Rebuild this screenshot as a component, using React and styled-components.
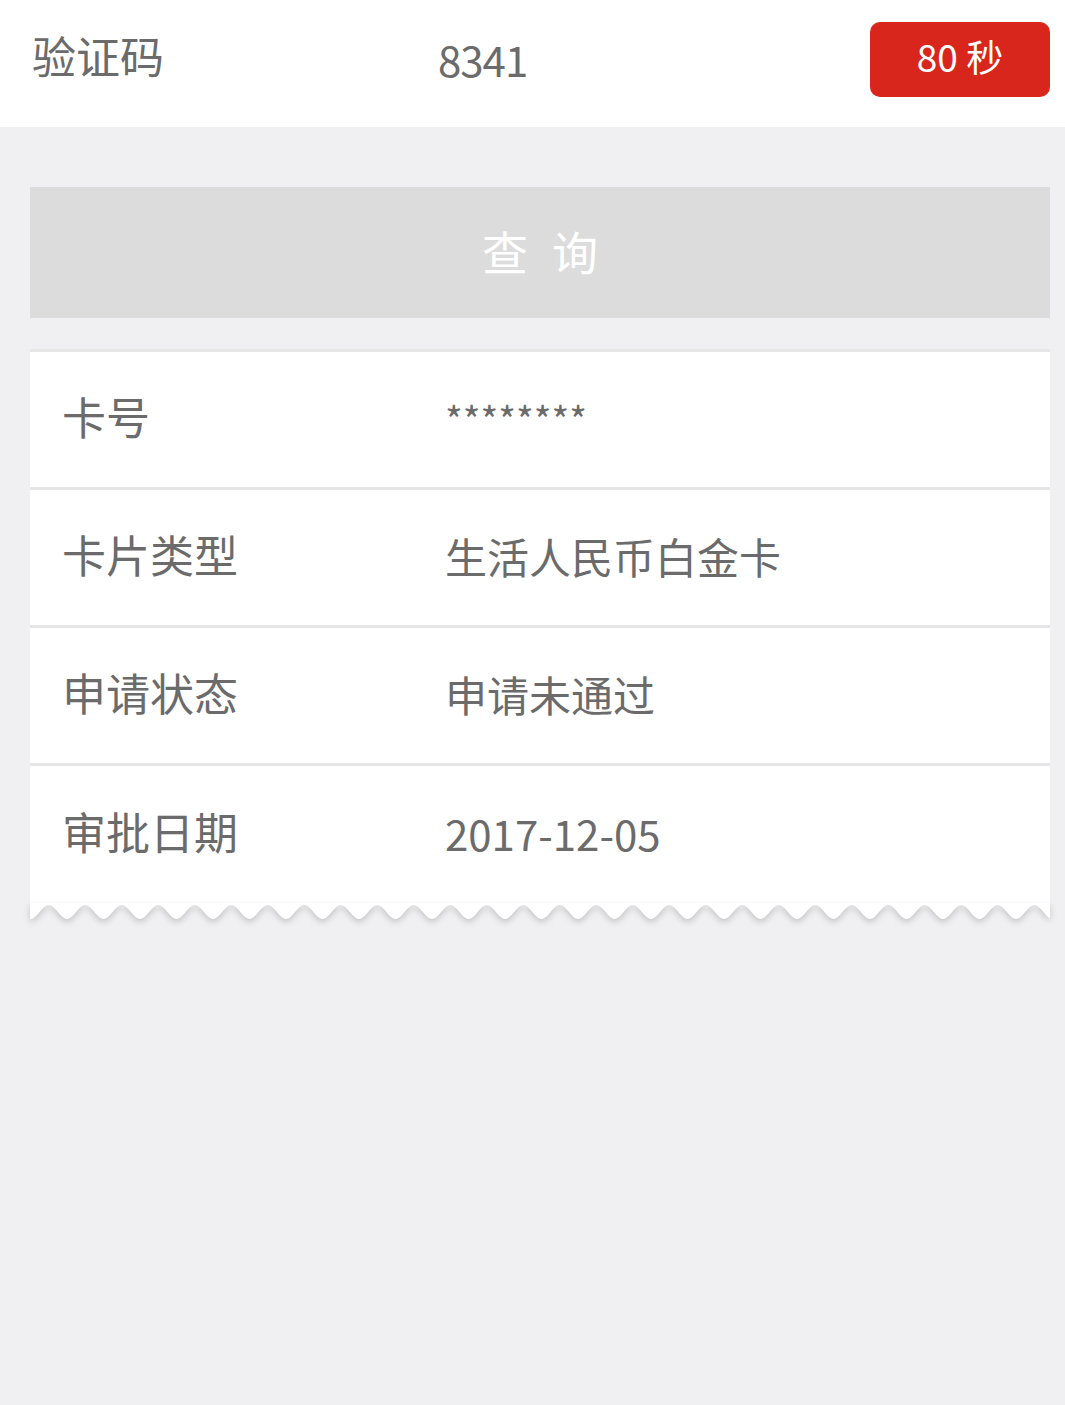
import React from 'react';
import styled, { createGlobalStyle } from 'styled-components';

const rows = [
  { label: '卡号', value: '********', masked: true },
  { label: '卡片类型', value: '生活人民币白金卡' },
  { label: '申请状态', value: '申请未通过' },
  { label: '审批日期', value: '2017-12-05' },
];

// zigzag edge under the card, drawn as a sine strip
const WAVE_W = 1020;
const wavePath = () => {
  let d = 'M0,0 ';
  for (let x = 0; x <= WAVE_W; x += 2) {
    const y = 9 + 7 * Math.cos((2 * Math.PI * (x - 37)) / 36.5);
    d += `L${x},${y.toFixed(2)} `;
  }
  return d + `L${WAVE_W},0 Z`;
};

const App = () => {
  return (
    <>
      <GlobalStyle />
      <TopBar>
        <BarLabel>验证码</BarLabel>
        <Code>8341</Code>
        <CountDown>80 秒</CountDown>
      </TopBar>

      <Content>
        <QueryButton>查询</QueryButton>

        <Card>
          {rows.map((r, i) => (
            <Row key={r.label} last={i === rows.length - 1}>
              <RowLabel>{r.label}</RowLabel>
              <RowValue masked={r.masked}>{r.value}</RowValue>
            </Row>
          ))}
        </Card>
        <Wave viewBox={`0 0 ${WAVE_W} 18`} preserveAspectRatio="none">
          <path d={wavePath()} fill="#fff" />
        </Wave>
      </Content>
    </>
  );
};

export default App;

const GlobalStyle = createGlobalStyle`
  html, body {
    margin: 0;
    background: #f0f0f2;
    font-family: "Noto Sans CJK SC", "Noto Sans", sans-serif;
  }
  body {
    min-height: 1405px;
  }
`;

const TopBar = styled.div`
  display: flex;
  align-items: center;
  height: 127px;
  box-sizing: border-box;
  padding: 0 15px 8px 32px;
  background: #fff;
`;

const BarLabel = styled.div`
  width: 406px;
  font-size: 44px;
  color: #6b6b6b;
  line-height: 1;
  padding-bottom: 10px;
`;

const Code = styled.div`
  font-size: 42px;
  color: #6b6b6b;
  letter-spacing: -1px;
  line-height: 1;
  padding-bottom: 2px;
`;

const CountDown = styled.div`
  margin-left: auto;
  width: 180px;
  height: 75px;
  box-sizing: border-box;
  padding-bottom: 8px;
  border-radius: 10px;
  background: #d9261c;
  color: #fff;
  font-size: 37px;
  display: flex;
  align-items: center;
  justify-content: center;
`;

const Content = styled.div`
  padding: 60px 15px 0 30px;
`;

const QueryButton = styled.div`
  height: 131px;
  box-sizing: border-box;
  padding: 0 0 6px 24px;
  background: #dcdcdc;
  color: #fff;
  font-size: 46px;
  letter-spacing: 24px;
  display: flex;
  align-items: center;
  justify-content: center;
`;

const Card = styled.div`
  margin-top: 31px;
  background: #fff;
  border-top: 3px solid #e6e6e6;
`;

const Row = styled.div`
  display: flex;
  align-items: center;
  height: ${(p) => (p.last ? '137px' : '135px')};
  padding-left: 32px;
  border-bottom: ${(p) => (p.last ? 'none' : '3px solid #e6e6e6')};
`;

const RowLabel = styled.div`
  width: 383px;
  font-size: 44px;
  color: #6b6b6b;
  line-height: 1;
  padding-bottom: 8px;
`;

const RowValue = styled.div`
  font-size: ${(p) => (p.masked ? '38px' : '42px')};
  color: #6b6b6b;
  line-height: 1;
  letter-spacing: 0;
  padding-bottom: ${(p) => (p.masked ? '2px' : '4px')};
`;

const Wave = styled.svg`
  display: block;
  width: ${WAVE_W}px;
  height: 18px;
  filter: drop-shadow(0 3px 3px rgba(0, 0, 0, 0.18));
`;
